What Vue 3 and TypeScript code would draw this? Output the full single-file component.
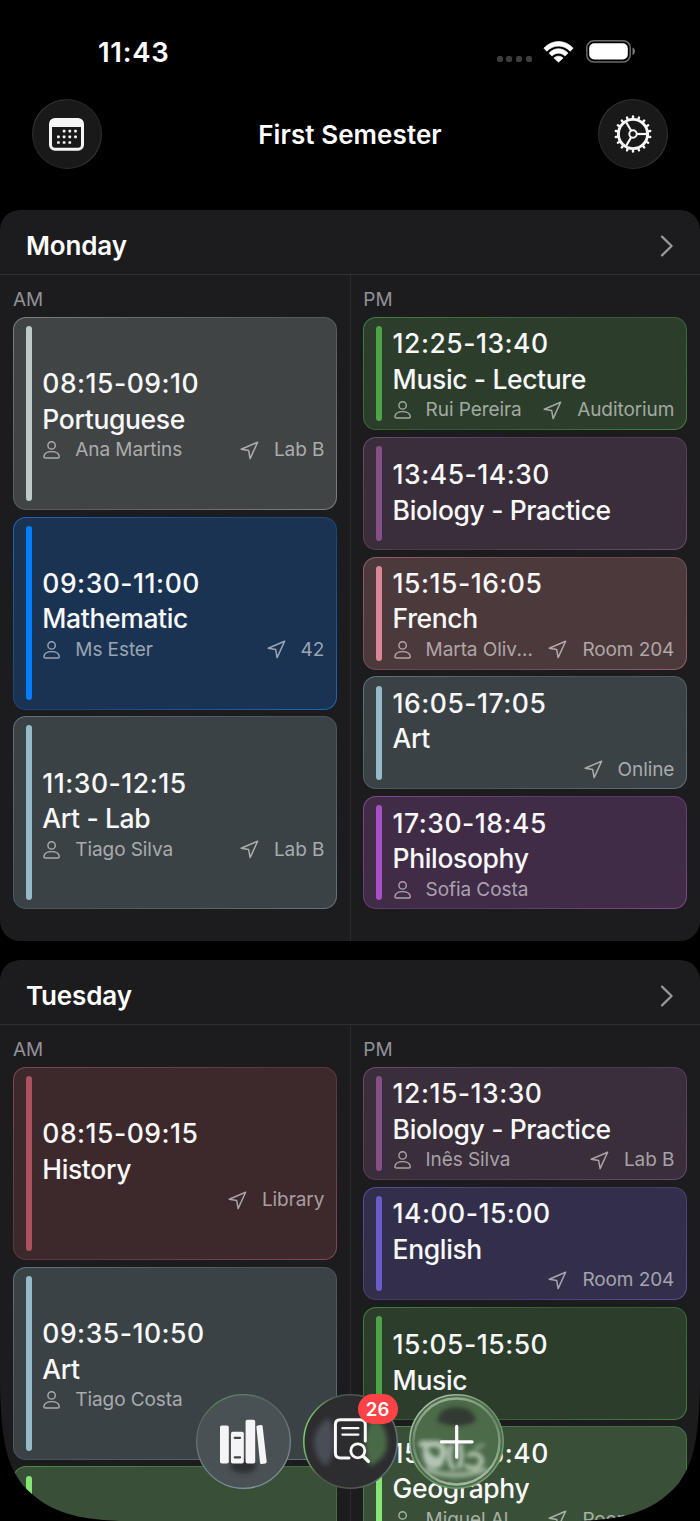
<script setup lang="ts">
interface Lesson {
  time: string
  title: string
  tone: string
  teacher?: string
  room?: string
}
interface Day {
  name: string
  am: Lesson[]
  pm: Lesson[]
}

const days: Day[] = [
  {
    name: 'Monday',
    am: [
      { time: '08:15-09:10', title: 'Portuguese', tone: 'silver', teacher: 'Ana Martins', room: 'Lab B' },
      { time: '09:30-11:00', title: 'Mathematic', tone: 'blue', teacher: 'Ms Ester', room: '42' },
      { time: '11:30-12:15', title: 'Art - Lab', tone: 'steel', teacher: 'Tiago Silva', room: 'Lab B' },
    ],
    pm: [
      { time: '12:25-13:40', title: 'Music - Lecture', tone: 'green', teacher: 'Rui Pereira', room: 'Auditorium' },
      { time: '13:45-14:30', title: 'Biology - Practice', tone: 'plum' },
      { time: '15:15-16:05', title: 'French', tone: 'rose', teacher: 'Marta Oliveira', room: 'Room 204' },
      { time: '16:05-17:05', title: 'Art', tone: 'steel', room: 'Online' },
      { time: '17:30-18:45', title: 'Philosophy', tone: 'violet', teacher: 'Sofia Costa' },
    ],
  },
  {
    name: 'Tuesday',
    am: [
      { time: '08:15-09:15', title: 'History', tone: 'red', room: 'Library' },
      { time: '09:35-10:50', title: 'Art', tone: 'steel', teacher: 'Tiago Costa' },
      { time: '', title: '', tone: 'lime' },
    ],
    pm: [
      { time: '12:15-13:30', title: 'Biology - Practice', tone: 'plum', teacher: 'Inês Silva', room: 'Lab B' },
      { time: '14:00-15:00', title: 'English', tone: 'indigo', room: 'Room 204' },
      { time: '15:05-15:50', title: 'Music', tone: 'green' },
      { time: '15:55-16:40', title: 'Geography', tone: 'lime', teacher: 'Miguel Almeida', room: 'Room 204' },
      { time: '', title: '', tone: 'rose' },
    ],
  },
]

const halves = (day: Day) => [
  { label: 'AM', lessons: day.am },
  { label: 'PM', lessons: day.pm },
]

const calendarDots: [number, number][] = [
  [15.1, 13.2], [20.8, 13.2], [26.5, 13.2],
  [9.4, 18.9], [15.1, 18.9], [20.8, 18.9], [26.5, 18.9],
  [9.4, 24.5], [15.1, 24.5], [20.8, 24.5],
]
const teeth = Array.from({ length: 18 }, (_, i) => i * 20 + 10)
</script>

<template>
  <div class="screen">
    <div class="status">
      <span class="clock">11:43</span>
      <div class="status-icons">
        <div class="signal"><i></i><i></i><i></i><i></i></div>
        <svg class="wifi" width="31" height="23" viewBox="0 0 31 23">
          <path d="M1 8.2 C9 -0.6 22 -0.6 30 8.2 L27.2 11.2 C20.7 4.3 10.3 4.3 3.8 11.2 Z" fill="#fff" stroke="#fff" stroke-width=".8" stroke-linejoin="round" />
          <path d="M6 13.1 C11.4 7.2 19.6 7.2 25 13.1 L22.1 16.1 C18.4 12.2 12.6 12.2 8.9 16.1 Z" fill="#fff" stroke="#fff" stroke-width=".6" stroke-linejoin="round" />
          <path d="M10.9 18 C13.5 15.5 17.5 15.5 20.1 18 L15.5 22.2 Z" fill="#fff" stroke="#fff" stroke-width=".6" stroke-linejoin="round" />
        </svg>
        <svg class="battery" width="50" height="23" viewBox="0 0 50 23">
          <rect x=".8" y=".8" width="43.4" height="21.2" rx="7" fill="none" stroke="#6a6a6a" stroke-width="1.5" />
          <rect x="3.2" y="3.3" width="38.6" height="16.2" rx="5" fill="#fff" />
          <path d="M46.5 7.6 C49.7 8.8 49.7 14 46.5 15.2 Z" fill="#777" />
        </svg>
      </div>
    </div>

    <header class="nav">
      <button class="round">
        <svg class="cal" width="35" height="33" viewBox="0 0 35 33">
          <rect x="1.5" y="1.5" width="32" height="29.8" rx="4.5" fill="none" stroke="#f5f5f5" stroke-width="3" />
          <path d="M1 9 V5 Q1 1 5 1 H30 Q34 1 34 5 V9 Z" fill="#f5f5f5" />
          <rect v-for="(d, i) in calendarDots" :key="i" :x="d[0] - 1.35" :y="d[1] - 1.35" width="2.7" height="2.7" rx=".7" fill="#f5f5f5" />
        </svg>
      </button>
      <h1>First Semester</h1>
      <button class="round">
        <svg width="38" height="38" viewBox="-19 -19 38 38" fill="none" stroke="#f7f7f7">
          <circle r="14.6" stroke-width="2.9" />
          <circle r="3.7" stroke-width="2" />
          <path v-for="a in [0, 120, 240]" :key="a" d="M4 0 H13.6" stroke-width="2.2" :transform="`rotate(${a})`" />
          <path v-for="t in teeth" :key="t" d="M15.5 0 H17.5" stroke-width="2.4" stroke-linecap="round" :transform="`rotate(${t})`" />
        </svg>
      </button>
    </header>

    <section v-for="day in days" :key="day.name" class="day">
      <div class="day-head">
        <h2>{{ day.name }}</h2>
        <svg width="14" height="22" viewBox="0 0 14 22"><path d="M2 1.6 L11.6 11 L2 20.4" fill="none" stroke="#98989f" stroke-width="2.2" stroke-linecap="round" stroke-linejoin="round" /></svg>
      </div>
      <div class="halves">
        <div v-for="half in halves(day)" :key="half.label" class="half">
          <div class="label">{{ half.label }}</div>
          <div class="lessons">
            <article v-for="(l, i) in half.lessons" :key="i" class="card" :class="l.tone">
              <div class="bar"></div>
              <div class="body">
                <div class="time">{{ l.time }}</div>
                <div class="title">{{ l.title }}</div>
                <div v-if="l.teacher || l.room" class="info">
                  <div class="teacher">
                    <template v-if="l.teacher">
                      <svg class="glyph" width="18" height="18" viewBox="0 0 18 18" fill="none" stroke="currentColor" stroke-width="1.4">
                        <ellipse cx="9.6" cy="4.4" rx="3.7" ry="3.7" />
                        <path d="M3.4 17 Q1.8 17 1.9 15.5 C2.3 12.5 5.5 10.6 9.6 10.6 C13.7 10.6 16.9 12.5 17.3 15.5 Q17.3 17 15.7 17 Z" />
                      </svg>
                      <span class="name">{{ l.teacher }}</span>
                    </template>
                  </div>
                  <div v-if="l.room" class="room">
                    <svg class="glyph" width="19" height="19" viewBox="0 0 19 19" fill="none" stroke="currentColor" stroke-width="1.5" stroke-linejoin="round">
                      <path d="M17.6 1.2 L1.2 8.3 L8.7 9.6 L10.1 17.6 Z" />
                    </svg>
                    <span>{{ l.room }}</span>
                  </div>
                </div>
              </div>
            </article>
          </div>
        </div>
      </div>
    </section>

    <svg class="corner left" width="120" height="140" viewBox="0 0 120 140"><path d="M0 4 C1 49 5 75 15 92 C21 103 25 107 32 113 C42 122 53 128 67 132.5 C82 137 95 139 120 140 H0 Z" /></svg>
    <svg class="corner right" width="120" height="140" viewBox="0 0 120 140"><path d="M0 4 C1 49 5 75 15 92 C21 103 25 107 32 113 C42 122 53 128 67 132.5 C82 137 95 139 120 140 H0 Z" /></svg>

    <nav class="dock">
      <svg class="orb" width="95" height="95" viewBox="0 0 95 95">
        <defs>
          <filter id="soft" x="-50%" y="-50%" width="200%" height="200%"><feGaussianBlur stdDeviation="2.6" /></filter>
          <linearGradient id="rimA" x1=".3" y1="0" x2=".6" y2="1"><stop offset="0" stop-color="#5b8a5c" /><stop offset=".2" stop-color="#5a656b" /><stop offset="1" stop-color="#8295a2" /></linearGradient>
        </defs>
        <circle cx="47.5" cy="47.5" r="46.8" fill="#4a5155" stroke="url(#rimA)" stroke-width="1.3" />
        <ellipse cx="47.5" cy="72" rx="13" ry="7" fill="#2b2f32" filter="url(#soft)" />
        <g fill="#f5f5f8">
          <rect x="24" y="31.5" width="8.8" height="38" rx="1.8" />
          <rect x="35" y="37.8" width="12.8" height="31.7" rx="1.8" />
          <rect x="49.6" y="25.8" width="9.6" height="43.7" rx="1.8" />
          <path d="M61.8 32.8 L65.2 32.4 L69.3 68 L65.4 68.5 Z" stroke="#f5f5f8" stroke-width="2.8" stroke-linejoin="round" />
        </g>
        <path d="M38.7 43.8 H44.1 M38.7 63.3 H44.1" stroke="#3f4649" stroke-width="2.2" stroke-linecap="round" />
      </svg>

      <div class="orb-wrap">
        <svg class="orb" width="95" height="95" viewBox="0 0 95 95">
          <defs>
            <linearGradient id="rimB" x1="0" y1=".4" x2="1" y2=".6"><stop offset="0" stop-color="#79d267" /><stop offset=".25" stop-color="#4a5a4d" /><stop offset=".6" stop-color="#525456" /><stop offset="1" stop-color="#66737d" /></linearGradient>
          </defs>
          <circle cx="47.5" cy="47.5" r="46.7" fill="#2d2d2f" stroke="url(#rimB)" stroke-width="1.5" />
          <g filter="url(#soft)">
            <path d="M26 24 Q11 34 11 48 Q12 66 24 72 Q31 60 31 48 Q31 34 26 24 Z" fill="#494e56" />
            <path d="M67 28 Q62 38 62 49 Q62 62 67 72 Q83 65 84 50 Q84 34 76 27 Z" fill="#4a6a47" />
          </g>
          <g fill="none" stroke="#fafafa" stroke-width="3" stroke-linecap="round" stroke-linejoin="round">
            <path d="M62.3 47 V30.7 Q62.3 25.8 57.4 25.8 H37.3 Q32.4 25.8 32.4 30.7 V59 Q32.4 63.9 37.3 63.9 H46" />
            <path d="M39.4 34.2 H55.4 M39.4 40.6 H55.4" stroke-width="2.2" />
            <circle cx="54.8" cy="56.8" r="7" stroke-width="2.8" />
            <path d="M60.2 62.2 L65.4 67.4" stroke-width="3.4" />
          </g>
        </svg>
        <span class="badge">26</span>
      </div>

      <svg class="orb" width="95" height="95" viewBox="0 0 95 95">
        <defs>
          <filter id="smear" x="-50%" y="-50%" width="200%" height="200%"><feGaussianBlur stdDeviation="2.2" /></filter>
          <filter id="hair" x="-10%" y="-10%" width="120%" height="120%"><feGaussianBlur stdDeviation=".6" /></filter>
          <linearGradient id="rimC" x1="0" y1="0" x2="1" y2="1"><stop offset="0" stop-color="#c3d6c2" /><stop offset=".5" stop-color="#6a9367" /><stop offset="1" stop-color="#75a872" /></linearGradient>
          <linearGradient id="ringC" x1=".3" y1="0" x2=".6" y2="1"><stop offset="0" stop-color="#a9bba8" /><stop offset=".4" stop-color="#6e8a6c" /><stop offset="1" stop-color="#b4c5b3" /></linearGradient>
          <clipPath id="ball"><circle cx="47.5" cy="47.5" r="42" /></clipPath>
        </defs>
        <circle cx="47.5" cy="47.5" r="46.7" fill="#4c6b49" stroke="url(#rimC)" stroke-width="1.5" />
        <circle cx="47.5" cy="47.5" r="43" fill="none" stroke="url(#ringC)" stroke-width="2.4" opacity=".85" filter="url(#hair)" />
        <g clip-path="url(#ball)">
          <path d="M28 27 Q31 13 47.5 13 Q64 13 67 27 Q58 32 47.5 32 Q37 32 28 27 Z" fill="#303b32" filter="url(#smear)" />
          <g fill="none" stroke="#b5c5b4" filter="url(#smear)" stroke-linecap="round">
            <path d="M13 50 H29 Q37 53 33 64 Q26 70 19 61" stroke-width="6.5" />
            <path d="M18 52 Q14 60 19 69 Q25 75 32 69" stroke-width="5" />
            <path d="M42 52 Q38 67 44 74 M51 51 Q54 65 50 73" stroke-width="4.5" />
            <path d="M60 61 Q70 57 73 67 Q69 78 57 72" stroke-width="4.5" />
            <path d="M67 54 L74 51" stroke-width="3.5" opacity=".6" />
            <path d="M18 76 Q46 86 76 76" stroke-width="5" opacity=".8" />
          </g>
        </g>
        <path d="M47.7 32.4 V63.2 M32.3 47.8 H63.1" stroke="#fff" stroke-width="3.2" stroke-linecap="round" />
      </svg>
    </nav>
  </div>
</template>

<style>
body {
  background: #000;
}
</style>

<style scoped>
.screen {
  position: relative;
  width: 700px;
  height: 1521px;
  overflow: hidden;
  background: #000;
  color: #fff;
  font-family: Inter, "Liberation Sans", sans-serif;
}
.status {
  height: 99px;
  box-sizing: border-box;
  padding: 0 64px 0 98px;
  display: flex;
  justify-content: space-between;
}
.clock {
  margin-top: 35px;
  line-height: 34px;
  font-size: 27.5px;
  font-weight: 600;
  letter-spacing: 0.7px;
}
.status-icons {
  display: flex;
  align-items: flex-start;
  padding-top: 40px;
}
.signal {
  display: flex;
  gap: 3.6px;
  margin: 16px 11.5px 0 0;
}
.signal i {
  width: 6px;
  height: 6px;
  border-radius: 2px;
  background: #3d3d3d;
}
.wifi {
  margin-right: 12px;
}
.nav {
  display: flex;
  align-items: center;
  justify-content: space-between;
  height: 70px;
  padding: 0 32px;
  margin-bottom: 41.3px;
}
.nav h1 {
  margin: 2px 0 0;
  font-size: 26px;
  font-weight: 600;
  line-height: 34px;
  letter-spacing: 0.08px;
}
.round {
  width: 70px;
  height: 70px;
  padding: 0;
  border: 1.5px solid transparent;
  border-radius: 50%;
  background: linear-gradient(#191919, #191919) padding-box,
    linear-gradient(135deg, #444 0%, #262626 35%, #262626 65%, #444 100%) border-box;
  display: flex;
  align-items: center;
  justify-content: center;
}
.cal {
  margin-right: 1px;
}
.day {
  height: 730.5px;
  margin-bottom: 19.6px;
  border-radius: 20px;
  background: #1c1c1e;
  overflow: hidden;
}
.day-head {
  display: flex;
  align-items: center;
  justify-content: space-between;
  height: 65px;
  box-sizing: border-box;
  padding: 7.5px 26px 0 26px;
  border-bottom: 1px solid #303032;
}
.day-head h2 {
  margin: 0;
  font-size: 26px;
  font-weight: 600;
  line-height: 34px;
  letter-spacing: -0.15px;
}
.halves {
  display: grid;
  grid-template-columns: 350px 350px;
  height: 666px;
}
.half {
  box-sizing: border-box;
  padding: 0 13px;
}
.half + .half {
  border-left: 1px solid #2b2b2d;
  padding-left: 12.3px;
}
.label {
  height: 41.7px;
  line-height: 49px;
  font-size: 19px;
  color: #929298;
}
.lessons {
  display: flex;
  flex-direction: column;
  gap: 6.7px;
  height: 592.3px;
}
.card {
  flex: 1 1 0;
  min-height: 0;
  box-sizing: border-box;
  display: flex;
  gap: 10.3px;
  padding: 8.2px 11.7px 8.2px 11.5px;
  border: 1.3px solid transparent;
  border-radius: 13px;
  background: linear-gradient(var(--bg), var(--bg)) padding-box,
    linear-gradient(145deg, var(--edge) 0%, var(--dim) 45%, var(--dim) 55%, var(--edge) 100%) border-box;
}
.bar {
  flex: none;
  width: 6.5px;
  border-radius: 3.3px;
  background: var(--bar);
}
.body {
  flex: 1;
  min-width: 0;
  display: flex;
  flex-direction: column;
  justify-content: center;
  padding-bottom: 1.2px;
}
.time,
.title {
  flex: none;
  height: 35.5px;
  line-height: 35.5px;
  font-size: 26.5px;
  font-weight: 500;
  white-space: nowrap;
  color: #f8f8f9;
}
.time {
  letter-spacing: 0.5px;
}
.title {
  letter-spacing: -0.37px;
}
.info {
  flex: none;
  display: flex;
  align-items: center;
  gap: 9px;
  height: 26px;
  margin-bottom: -3.8px;
  line-height: 26px;
  font-size: 19px;
  letter-spacing: -0.08px;
  white-space: nowrap;
  color: rgba(255, 255, 255, 0.56);
}
.teacher {
  flex: 1;
  min-width: 0;
  display: flex;
  align-items: center;
}
.room {
  flex: none;
  display: flex;
  align-items: center;
}
.glyph {
  flex: none;
  margin-right: 15px;
}
.name {
  overflow: hidden;
  text-overflow: ellipsis;
}
.silver { --bg: #414445; --edge: #7a8182; --dim: #565b5c; --bar: #bccaca; }
.blue { --bg: #1a3352; --edge: #2064bd; --dim: #1c4579; --bar: #057dff; }
.steel { --bg: #3b4246; --edge: #61747e; --dim: #49555b; --bar: #96bac7; }
.green { --bg: #2c3d2c; --edge: #448043; --dim: #365a36; --bar: #4fa545; }
.plum { --bg: #3a2e3b; --edge: #6a4b70; --dim: #4c3a4f; --bar: #874f87; }
.rose { --bg: #4c393c; --edge: #93606a; --dim: #66494e; --bar: #dc8696; }
.violet { --bg: #412c48; --edge: #80498f; --dim: #593865; --bar: #a94fc8; }
.red { --bg: #3d282c; --edge: #814957; --dim: #583840; --bar: #ad515c; }
.indigo { --bg: #332f4b; --edge: #59509a; --dim: #403a67; --bar: #6a5ccb; }
.lime { --bg: #3a4f37; --edge: #4f8a4b; --dim: #426a40; --bar: #86e573; }

.corner {
  position: absolute;
  bottom: 0;
  fill: #000;
}
.corner.left {
  left: 0;
}
.corner.right {
  right: 0;
  transform: scaleX(-1);
}
.dock {
  position: absolute;
  left: 196px;
  top: 1393.5px;
  display: flex;
  gap: 11.5px;
}
.orb {
  display: block;
}
.orb-wrap {
  position: relative;
}
.badge {
  position: absolute;
  left: 55.5px;
  top: 0;
  width: 39.5px;
  height: 30.5px;
  border-radius: 15.3px;
  background: #ff4245;
  font-size: 18.5px;
  font-weight: 600;
  line-height: 30px;
  text-align: center;
  letter-spacing: 0.4px;
}
</style>
